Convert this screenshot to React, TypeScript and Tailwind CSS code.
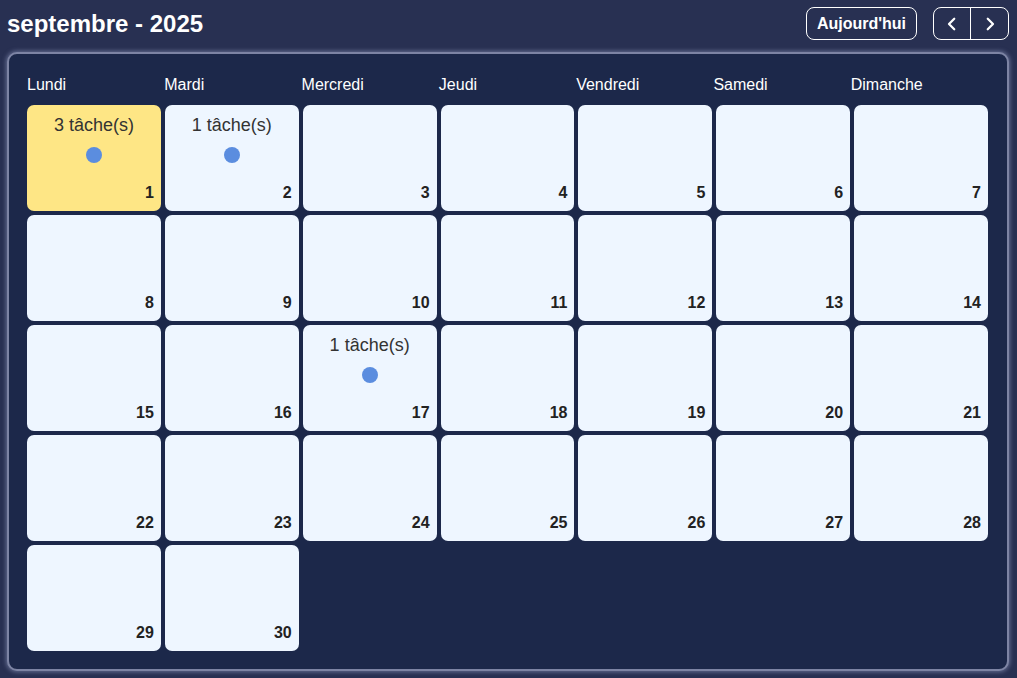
const jours = ["Lundi", "Mardi", "Mercredi", "Jeudi", "Vendredi", "Samedi", "Dimanche"];

const taches: Record<number, number> = { 1: 3, 2: 1, 17: 1 };

function DayCell({ day, today }: { day: number; today?: boolean }) {
  const count = taches[day];
  return (
    <div
      className={`h-[106px] rounded-[7px] flex flex-col items-center pt-[9px] pb-[9px] ${
        today ? "bg-[#fee685]" : "bg-[#eef6ff]"
      }`}
    >
      {count ? (
        <>
          <div className="text-[18px] leading-[22px] text-[#333]">{count} tâche(s)</div>
          <div className="mt-[11px] w-4 h-4 rounded-full bg-[#5b8ddf]" />
        </>
      ) : null}
      <div className="mt-auto self-end pr-[7px] text-[16px] leading-[18px] font-bold text-[#222]">{day}</div>
    </div>
  );
}

export default function App() {
  const days = Array.from({ length: 30 }, (_, i) => i + 1);
  return (
    <div
      className="w-[1017px] h-[678px] bg-[#283052] flex flex-col pl-[7px] pr-[8px] pb-[7px]"
      style={{ fontFamily: '"Liberation Sans", Arial, sans-serif' }}
    >
      {/* Header */}
      <div className="flex items-center justify-between pt-[7px] h-[40px]">
        <h1 className="text-[24px] font-bold text-white leading-none mt-[1px]">septembre - 2025</h1>
        <div className="flex items-center gap-4">
          <button className="h-[33px] px-[10px] border border-white rounded-lg text-white font-bold text-[16px]">
            Aujourd'hui
          </button>
          <div className="flex h-[33px] border border-white rounded-lg text-white">
            <button className="w-[37px] flex items-center justify-center border-r border-white">
              <svg width="18" height="18" viewBox="0 0 24 24" fill="none" stroke="currentColor" strokeWidth="3" strokeLinecap="round" strokeLinejoin="round">
                <path d="M15 5l-7 7 7 7" />
              </svg>
            </button>
            <button className="w-[37px] flex items-center justify-center">
              <svg width="18" height="18" viewBox="0 0 24 24" fill="none" stroke="currentColor" strokeWidth="3" strokeLinecap="round" strokeLinejoin="round">
                <path d="M9 5l7 7-7 7" />
              </svg>
            </button>
          </div>
        </div>
      </div>

      {/* Calendar panel */}
      <div className="mt-[12px] flex-1 rounded-[10px] border-2 border-[#7d84a4] bg-[#1c284a] shadow-[0_0_4px_1px_rgba(160,170,210,0.5)] pl-[18px] pr-[19px] pt-[21px]">
        <div className="grid grid-cols-7 h-[30px]">
          {jours.map((j) => (
            <div key={j} className="text-white text-[16px] leading-[20px]">
              {j}
            </div>
          ))}
        </div>
        <div className="grid grid-cols-7 gap-1">
          {days.map((d) => (
            <DayCell key={d} day={d} today={d === 1} />
          ))}
        </div>
      </div>
    </div>
  );
}
